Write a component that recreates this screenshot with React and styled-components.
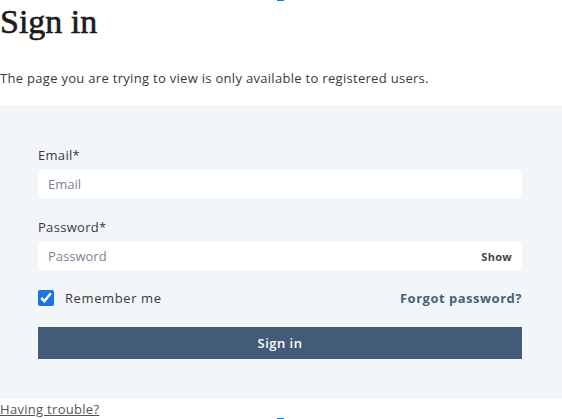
import React from 'react';
import styled, { createGlobalStyle } from 'styled-components';

const GlobalStyle = createGlobalStyle`
  html, body {
    margin: 0;
    padding: 0;
    background: #fff;
  }
  body {
    font-family: "Open Sans", "Liberation Sans", sans-serif;
    color: #333;
  }
`;

const App = () => {
  return (
    <Page>
      <GlobalStyle />
      <FocusMark />
      <Title>Sign in</Title>
      <Intro>The page you are trying to view is only available to registered users.</Intro>
      <Panel>
        <Form onSubmit={(e) => e.preventDefault()}>
          <Field>
            <Label>Email*</Label>
            <InputBox>
              <Input type="email" placeholder="Email" />
            </InputBox>
          </Field>
          <Field>
            <Label>Password*</Label>
            <InputBox>
              <Input type="password" placeholder="Password" />
              <ShowButton type="button">Show</ShowButton>
            </InputBox>
          </Field>
          <OptionsRow>
            <Remember>
              <Check type="checkbox" defaultChecked />
              Remember me
            </Remember>
            <Forgot href="#">Forgot password?</Forgot>
          </OptionsRow>
          <Submit type="submit">Sign in</Submit>
        </Form>
      </Panel>
      <Trouble href="#">Having trouble?</Trouble>
      <FocusMark />
    </Page>
  );
};

export default App;

const Page = styled.div`
  width: 562px;
  height: 419px;
  overflow: hidden;
  display: flex;
  flex-direction: column;
`;

const FocusMark = styled.div`
  width: 7px;
  height: 1px;
  background: #1a73e8;
  margin: 0 0 0 277px;
  flex: none;
`;

const Title = styled.h1`
  margin: 0;
  padding-top: 1px;
  font-family: "Liberation Serif", "DejaVu Serif", serif;
  font-weight: 400;
  font-size: 34px;
  line-height: 40px;
  color: #1b1b1b;
  -webkit-text-stroke: 0.6px #1b1b1b;
`;

const Intro = styled.p`
  margin: 26px 0 0;
  font-size: 13px;
  line-height: 20px;
  color: #3a3a3a;
  letter-spacing: 0.3px;
`;

const Panel = styled.section`
  margin-top: 17px;
  background: #f3f6f9;
  padding: 41px 40px 40px 38px;
`;

const Form = styled.form`
  display: flex;
  flex-direction: column;
`;

const Field = styled.div`
  display: flex;
  flex-direction: column;
  margin-bottom: 20px;
`;

const Label = styled.label`
  font-size: 13px;
  line-height: 18px;
  color: #3a3a3a;
  margin-bottom: 6px;
  letter-spacing: 0.3px;
`;

const InputBox = styled.div`
  display: flex;
  align-items: center;
  height: 28px;
  background: #fff;
`;

const Input = styled.input`
  flex: 1;
  min-width: 0;
  height: 100%;
  border: none;
  outline: none;
  background: transparent;
  padding: 0 10px;
  font-family: inherit;
  font-size: 13px;
  color: #333;
  &::placeholder {
    color: #7a8594;
  }
`;

const ShowButton = styled.button`
  border: none;
  background: transparent;
  padding: 0 10px;
  font-family: inherit;
  font-weight: 700;
  font-size: 11px;
  letter-spacing: 0.3px;
  color: #444;
  cursor: pointer;
`;

const OptionsRow = styled.div`
  display: flex;
  align-items: center;
  justify-content: space-between;
  height: 16px;
`;

const Remember = styled.label`
  display: flex;
  align-items: center;
  gap: 11px;
  font-size: 13px;
  letter-spacing: 0.6px;
  color: #3a3a3a;
`;

const Check = styled.input`
  width: 16px;
  height: 16px;
  margin: 0;
  accent-color: #1a73e8;
`;

const Forgot = styled.a`
  font-size: 13px;
  font-weight: 700;
  letter-spacing: 0.5px;
  color: #4a5f78;
  text-decoration: none;
`;

const Submit = styled.button`
  margin-top: 21px;
  height: 32px;
  border: none;
  background: #425c78;
  color: #fff;
  font-family: inherit;
  font-weight: 600;
  font-size: 13px;
  letter-spacing: 0.5px;
  cursor: pointer;
`;

const Trouble = styled.a`
  margin-top: 1px;
  align-self: flex-start;
  font-size: 13px;
  line-height: 18px;
  letter-spacing: 0.3px;
  color: #555;
  text-decoration: underline;
`;
